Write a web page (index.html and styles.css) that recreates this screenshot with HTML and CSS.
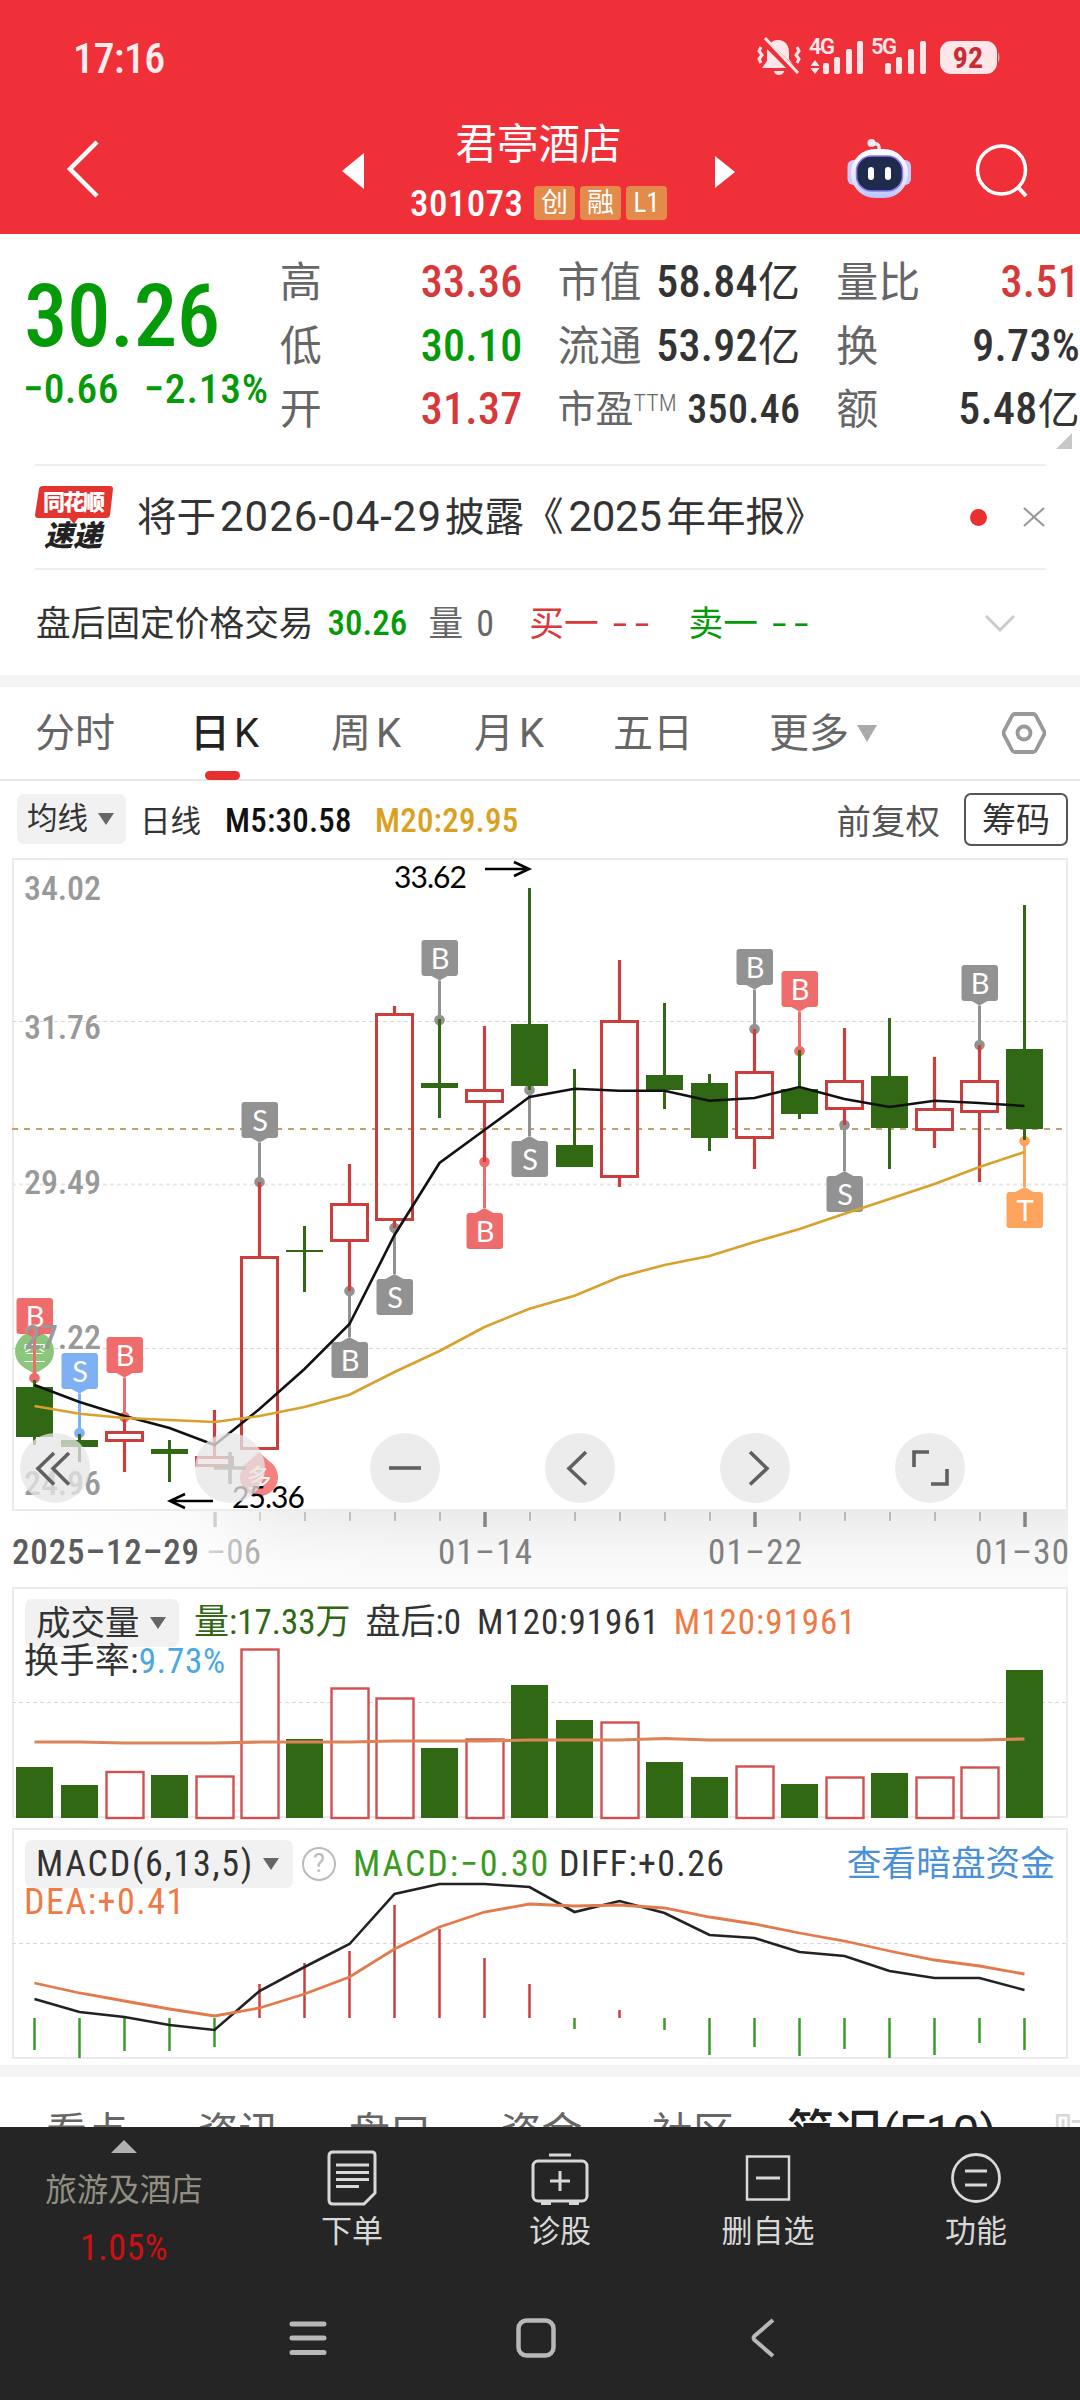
FILE: index.html
```html
<!DOCTYPE html>
<html lang="zh-CN">
<head>
<meta charset="utf-8">
<title>君亭酒店 301073</title>
<link rel="stylesheet" href="styles.css">
</head>
<body>
<header class="top">
  <div class="status">
    <span class="clock">17:16</span>
    <svg class="status-icons" width="250" height="44" viewBox="755 34 250 44">
      <g fill="#ffe6e8">
        <path d="M778 40c-7 0-11 6-11 13v8l-5 7h33l-6-9v-7c0-7-4-12-11-12z"/>
        <path d="M774 71h10a5 4 0 0 1-10 0z"/>
        <path d="M762 39l34 34" stroke="#f03038" stroke-width="7"/>
        <path d="M765 38l33 35M761 47l-2 4 3 4-3 4 2 4M797 47l2 4-3 4 3 4-2 4" fill="none" stroke="#ffe6e8" stroke-width="3"/>
        <text class="net" x="809" y="54" textLength="26">4G</text>
        <text class="net" x="871" y="54" textLength="26">5G</text>
        <path d="M810.500 66l4.500-6 4.500 6zM810.500 68l4.500 6 4.500-6z"/>
        <rect x="823" y="63" width="6" height="11" rx="2"/><rect x="834" y="57" width="6" height="17" rx="2"/><rect x="846" y="49" width="6" height="25" rx="2"/><rect x="857" y="41" width="6" height="33" rx="2"/>
        <rect x="885" y="63" width="6" height="11" rx="2"/><rect x="896" y="57" width="6" height="17" rx="2"/><rect x="908" y="49" width="6" height="25" rx="2"/><rect x="920" y="41" width="6" height="33" rx="2"/>
        <rect x="940" y="41" width="57" height="33" rx="11"/>
        <path d="M998 52q3 5.500 0 11z" fill="#f9a0a5"/>
        <text class="batt" x="968" y="68" text-anchor="middle">92</text>
      </g>
    </svg>
  </div>
  <nav class="nav">
    <svg class="back" width="34" height="60" viewBox="0 0 34 60"><path d="M31 3L4 30l27 27" fill="none" stroke="#fff" stroke-width="4.500"/></svg>
    <svg class="prev" width="23" height="36" viewBox="0 0 23 36"><path d="M0 18L22 0v36z" fill="#fff"/></svg>
    <div class="title">
      <h1>君亭酒店</h1>
      <div class="code"><span>301073</span><i>创</i><i>融</i><i>L1</i></div>
    </div>
    <svg class="next" width="22" height="32" viewBox="0 0 22 32"><path d="M0 0v32L20 16z" fill="#fff"/></svg>
    <svg class="robot" width="68" height="68" viewBox="845 136 68 68">
      <defs><linearGradient id="rb" x1="0" y1="0" x2="0" y2="1"><stop offset="0" stop-color="#fff"/><stop offset=".7" stop-color="#dfe2fb"/><stop offset="1" stop-color="#b9c2ff"/></linearGradient></defs>
      <path d="M879 152c1-8-2-9-6-8" fill="none" stroke="#f3e3f4" stroke-width="3.500"/><circle cx="871.500" cy="143" r="4" fill="#fbe9f3"/>
      <rect x="847.500" y="160" width="12" height="25" rx="6" fill="#c6cbfa"/><rect x="899" y="160" width="12" height="25" rx="6" fill="#c6cbfa"/>
      <rect x="851" y="149" width="57" height="49" rx="24" fill="url(#rb)"/>
      <rect x="856.500" y="156" width="46" height="35" rx="15" fill="#1f2b4d" stroke="#8b79ee" stroke-width="1.500"/>
      <rect x="868" y="167" width="6" height="13" rx="3" fill="#fff"/><rect x="885" y="167" width="6" height="13" rx="3" fill="#fff"/>
    </svg>
    <svg class="search" width="56" height="56" viewBox="0 0 56 56"><circle cx="26.500" cy="27" r="24" fill="none" stroke="#fff" stroke-width="3.500"/><path d="M43 44l8 9" stroke="#fff" stroke-width="4"/></svg>
  </nav>
</header>

<section class="quote">
  <div class="price">
    <b>30.26</b>
    <div class="chg"><span>−0.66</span><span>−2.13%</span></div>
  </div>
  <dl class="col c1">
    <dt>高</dt><dd class="up">33.36</dd>
    <dt>低</dt><dd class="dn">30.10</dd>
    <dt>开</dt><dd class="up">31.37</dd>
  </dl>
  <dl class="col c2">
    <dt>市值</dt><dd>58.84<em>亿</em></dd>
    <dt>流通</dt><dd>53.92<em>亿</em></dd>
    <dt class="sm">市盈<sup>TTM</sup></dt><dd class="sm">350.46</dd>
  </dl>
  <dl class="col c3">
    <dt>量比</dt><dd class="up">3.51</dd>
    <dt>换</dt><dd>9.73%</dd>
    <dt>额</dt><dd>5.48<em>亿</em></dd>
  </dl>
  <svg class="corner" width="16" height="16" viewBox="0 0 16 16"><path d="M16 0v16H0z" fill="#c8c8c8"/></svg>
</section>

<section class="news">
  <div class="logo"><svg width="80" height="42" viewBox="0 0 80 42"><path d="M8 1h67q3 0 3 3l-3 26q-.4 3-4 3H43l-4 6-5-6H3q-3 0-3-3L4 4q.5-3 4-3z" fill="#e3342f"/><text x="8" y="25" textLength="62">同花顺</text></svg><span>速递</span></div>
  <p>将于<span>2026-04-29</span>披露《<span class="y">2025</span>年年报》</p>
  <i class="dot"></i>
  <svg width="22" height="20" viewBox="0 0 22 20"><path d="M1 1l20 18M21 1L1 19" stroke="#999" stroke-width="2.200"/></svg>
</section>

<section class="after">
  <span>盘后固定价格交易</span><b class="dn">30.26</b><span class="g">量</span><span class="g n">0</span>
  <span class="up buy">买一</span><span class="up dd">--</span><span class="dn sell">卖一</span><span class="dn dd">--</span>
  <svg width="32" height="20" viewBox="0 0 32 20"><path d="M2 2l14 14L30 2" fill="none" stroke="#ccc" stroke-width="3"/></svg>
</section>

<nav class="tabs">
  <span>分时</span><span class="on">日K</span><span>周K</span><span>月K</span><span>五日</span><span class="more">更多<svg width="20" height="17" viewBox="0 0 20 17"><path d="M0 0h20L10 17z" fill="#aaa"/></svg></span>
  <svg class="gear" width="44" height="42" viewBox="0 0 44 42"><path d="M13 2h18q2 0 3 2l8 15q1 2 0 4l-8 15q-1 2-3 2H13q-2 0-3-2L2 23q-1-2 0-4l8-15q1-2 3-2z" fill="none" stroke="#999" stroke-width="3.800"/><circle cx="22" cy="21" r="6.500" fill="none" stroke="#999" stroke-width="3.800"/></svg>
</nav>

<div class="tools">
  <span class="pill ma">均线<svg width="16" height="12" viewBox="0 0 16 12"><path d="M0 0h16L8 12z" fill="#666"/></svg></span>
  <span class="day">日线</span><span class="m5">M5:30.58</span><span class="m20">M20:29.95</span>
  <span class="adj">前复权</span><span class="chip">筹码</span>
</div>

<section class="panel kline">
  <svg id="k" width="1080" height="730" viewBox="0 857 1080 730"></svg>
</section>

<section class="panel vol">
  <svg id="v" width="1080" height="240" viewBox="0 1587 1080 240"></svg>
  <div class="legend">
    <span class="pill">成交量<svg width="16" height="12" viewBox="0 0 16 12"><path d="M0 0h16L8 12z" fill="#666"/></svg></span>
    <span class="green">量:17.33万</span><span>盘后:0</span><span class="m120">M120:91961</span><span class="orange m120">M120:91961</span>
  </div>
  <div class="legend2">换手率:<span class="sky">9.73%</span></div>
</section>

<section class="panel macd">
  <svg id="m" width="1080" height="238" viewBox="0 1827 1080 238"></svg>
  <div class="legend">
    <span class="pill">MACD(6,13,5)<svg width="16" height="12" viewBox="0 0 16 12"><path d="M0 0h16L8 12z" fill="#666"/></svg></span>
    <i class="q">?</i>
    <span class="lime">MACD:−0.30</span><span class="diff">DIFF:+0.26</span><a>查看暗盘资金</a>
  </div>
  <div class="legend2 orange">DEA:+0.41</div>
</section>

<nav class="subtabs">
  <span>看点</span><span>资讯</span><span>盘口</span><span>资金</span><span>社区</span><span class="on">简况(F10)</span><span class="fade">财务</span>
</nav>

<footer class="bar">
  <div class="sector">
    <svg width="26" height="13" viewBox="0 0 26 13"><path d="M13 0l13 13H0z" fill="#b0b0b0"/></svg>
    <span>旅游及酒店</span><b>1.05%</b>
  </div>
  <div class="act"><svg width="60" height="60" viewBox="0 0 60 60" fill="none" stroke="#d8d8d8" stroke-width="3"><path d="M11 4h39q3 0 3 3v38l-11 11H11q-4 0-4-4V8q0-4 4-4z"/><path d="M14 17h33M14 24.500h33M14 31.500h33M14 38.500h23"/></svg><span>下单</span></div>
  <div class="act"><svg width="60" height="60" viewBox="0 0 60 60" fill="none" stroke="#d8d8d8" stroke-width="3"><path d="M19 7h22"/><rect x="3" y="13" width="54" height="40" rx="5"/><path d="M30 23v20M20 33h20"/><path d="M11 55.500h10M39 55.500h10"/></svg><span>诊股</span></div>
  <div class="act"><svg width="60" height="60" viewBox="0 0 60 60" fill="none" stroke="#d8d8d8" stroke-width="2.500"><rect x="9" y="8.500" width="42" height="43"/><path d="M18 30h24" stroke-width="3"/></svg><span>删自选</span></div>
  <div class="act"><svg width="60" height="60" viewBox="0 0 60 60" fill="none" stroke="#d8d8d8" stroke-width="2.800"><circle cx="30" cy="30" r="23.500"/><path d="M19 23h22M19 37h22"/></svg><span>功能</span></div>
</footer>
<div class="sys">
  <svg width="38" height="38" viewBox="0 0 38 38" stroke="#b8b8b8" stroke-width="5" stroke-linecap="round"><path d="M3 5h32M3 19h32M3 33.500h32"/></svg>
  <svg width="40" height="40" viewBox="0 0 40 40"><rect x="2.500" y="2.500" width="35" height="35" rx="8" fill="none" stroke="#b8b8b8" stroke-width="4.500"/></svg>
  <svg width="26" height="40" viewBox="0 0 26 40"><path d="M23 2L4.500 18q-2 2 0 4L23 38" fill="none" stroke="#b8b8b8" stroke-width="4"/></svg>
</div>
<script src="charts.js"></script>
</body>
</html>
```
FILE: styles.css
```css
* { box-sizing: border-box; }
body { margin: 0; width: 1080px; height: 2400px; overflow: hidden; background: #fff; color: #333;
  font-family: Roboto, "Noto Sans CJK SC", sans-serif; font-stretch: 75%; }
i, em { font-style: normal; }
svg { display: block; flex: none; }
span, b, i, dt, dd, p, a { white-space: nowrap; }
.up { color: #d7383a; }
.dn { color: #049a08; }

.top { height: 234px; background: #f03038; color: #fff; }
.status { height: 118px; display: flex; align-items: flex-start; padding: 34px 75px 0 73px; justify-content: space-between; }
.clock { font-size: 42px; line-height: 50px; font-weight: 500; color: #ffecec; letter-spacing: -.6px; }
.net { font-size: 22px; font-weight: 600; font-stretch: 88%; }
.batt { font-size: 30px; font-weight: 700; fill: #c92b34; font-stretch: 75%; }
.nav { height: 116px; display: flex; align-items: flex-start; }
.back { margin: 21px 0 0 66px; }
.prev { margin: 35px 0 0 242px; }
.title { margin-left: 32px; width: 281px; }
.title h1 { margin: 0 auto; padding: 2px 0 0 2px; font-size: 41.500px; line-height: 50px; font-weight: 400; text-align: center; width: 170px; white-space: nowrap; }
.code { display: flex; gap: 5px; align-items: center; height: 34px; margin: 16px 0 0 13px; }
.code span { font-size: 37px; line-height: 36px; font-weight: 500; width: 117px; margin-right: 2px; letter-spacing: .4px; padding-top: 2px; }
.code i { width: 41px; height: 34px; border-radius: 4px; background: #e28b4b; font-size: 27px; line-height: 34px; text-align: center; }
.next { margin: 38px 0 0 37px; }
.robot { margin: 18px 0 0 108px; }
.search { margin: 25px 0 0 62px; }

.quote { position: relative; height: 230px; display: flex; padding-left: 25px; }
.price { width: 255px; color: #049a08; }
.price b { display: block; margin-top: 31px; font-size: 87px; line-height: 102px; font-weight: 500; letter-spacing: -.5px; margin-left: -1px; }
.chg { display: flex; gap: 25px; font-size: 41.500px; line-height: 44px; font-weight: 500; letter-spacing: .8px; margin-left: -2px; }
.chg span:first-child { letter-spacing: .3px; }
.col { margin: 17px 0 0; display: grid; grid-template-columns: 84px 1fr; grid-auto-rows: 63.500px; line-height: 63.500px; }
.col dt { font-size: 42px; color: #666; }
.col dd { margin: 0; font-size: 44px; font-weight: 500; text-align: right; letter-spacing: .3px; }
.col dd em { font-size: 42px; font-weight: 400; }
.col .sm { font-size: 40px; }
.col dt.sm { font-size: 38px; }
.col sup { font-size: 24px; line-height: 1; vertical-align: 11px; font-weight: 300; }
.c1 { width: 243px; }
.c2 { width: 243px; margin-left: 35px; }
.c3 { width: 244px; margin-left: 36px; }
.corner { position: absolute; right: 8px; bottom: 15px; }

.news { height: 106px; margin: 0 34px 0 35px; border-top: 2px solid #eee; border-bottom: 2px solid #eee; display: flex; align-items: center; }
.logo { width: 80px; height: 66px; margin-top: 1px; }
.logo text { fill: #fff; font-size: 22px; font-weight: 900; }
.logo span { display: block; margin: -4px 0 0 9px; font-size: 29px; line-height: 26px; font-weight: 900; font-style: italic; color: #222; }
.news p { margin: 0 0 0 22px; font-size: 39.500px; line-height: 60px; color: #333; width: 833px; }
.news p span { font-size: 42px; font-stretch: 100%; letter-spacing: 1px; margin: 0 3px 0 4px; }
.news p .y { letter-spacing: -.4px; margin: 0 5px; }
.dot { width: 17px; height: 17px; border-radius: 50%; background: #e83030; margin-right: 36px; }

.after { height: 105px; padding-left: 36px; display: flex; align-items: center; font-size: 34.700px; line-height: 50px; padding-top: 2px; }
.after b { font-weight: 500; font-size: 35px; margin-left: 14px; width: 77px; }
.after .g { color: #666; margin-left: 24px; }
.after .g.n { margin-left: 13px; width: 17px; font-size: 36px; }
.after .buy { margin-left: 36px; }
.after .sell { margin-left: 38px; }
.after .dd { font-size: 52px; font-weight: 300; font-stretch: 100%; letter-spacing: 7px; margin-left: 14px; width: 38px; line-height: 44px; }
.after svg { margin-left: 174px; }

.tabs { height: 106px; border-top: 12px solid #f4f4f4; border-bottom: 2px solid #e8e8e8; display: flex; align-items: center; font-size: 40px; line-height: 95px; color: #666; padding-left: 35px; font-stretch: 100%; }
.tabs span { width: 77px; margin-right: 78px; }
.tabs .on { position: relative; color: #222; font-weight: 450; width: 70px; margin-right: 71px; letter-spacing: 4px; }
.tabs .on::after { content: ""; position: absolute; left: 15px; bottom: 1px; width: 35px; height: 9px; border-radius: 5px; background: #e63030; }
.tabs span:nth-child(3) { width: 70px; margin-right: 73px; letter-spacing: 5px; }
.tabs span:nth-child(4) { width: 70px; margin-right: 69px; letter-spacing: 5px; }
.tabs .more { display: flex; align-items: center; gap: 8px; width: 109px; margin-right: 120px; margin-left: 1px; }
.gear { margin-left: 4px; }

.tools { height: 76px; display: flex; align-items: center; padding: 0 12px 0 17px; font-size: 30.500px; line-height: 50px; }
.pill { display: flex; align-items: center; background: #f1f1f1; border-radius: 7px; }
.tools .pill { width: 109px; height: 50px; padding: 0 0 0 10px; gap: 10px; }
.day { margin-left: 14px; padding-top: 5px; }
.m5, .m20 { font-size: 33px; font-weight: 500; color: #111; margin-left: 24px; width: 127px; letter-spacing: .2px; padding-top: 4px; }
.m20 { color: #dca020; width: 143px; letter-spacing: .2px; margin-left: 23px; }
.adj { margin-left: auto; font-size: 34.500px; color: #555; padding-top: 5px; }
.chip { margin-left: 24px; width: 104px; height: 53px; border: 2px solid #555; border-radius: 7px; font-size: 34px; line-height: 51px; text-align: center; }

.panel { position: relative; }
.kline { height: 730px; }
.vol { height: 240px; }
.macd { height: 238px; }
.legend { position: absolute; left: 25px; right: 25px; top: 12px; height: 48px; display: flex; align-items: center; font-size: 35px; line-height: 50px; }
.legend .pill { height: 48px; padding: 0 13px 0 11px; gap: 10px; font-size: 34.500px; width: 154px; }
.legend2 { position: absolute; left: 24px; top: 51px; font-size: 35px; line-height: 48px; white-space: nowrap; letter-spacing: .4px; }
.vol .legend > span + span { margin-left: 15px; }
.vol .legend .m120 { letter-spacing: 1px; margin-left: 16px; }
.vol .legend .orange { margin-left: 14px; }
.macd .legend { top: 13px; font-size: 36px; }
.macd .legend .pill { width: 268px; font-size: 36px; letter-spacing: 1.750px; gap: 9px; }
.q { width: 34px; height: 34px; border: 2.500px solid #bbb; border-radius: 50%; color: #bbb; font-size: 25px; line-height: 30px; text-align: center; margin: 0 17px 0 9px; font-stretch: 100%; }
.lime { letter-spacing: 1.900px; width: 206px; }
.diff { letter-spacing: 1.300px; }
.macd .legend a { margin-left: auto; color: #4a90d9; font-size: 34.700px; }
.green { color: #306814; } .lime { color: #3a9a22; } .orange { color: #f07a45; } .sky { color: #4aa8e0; letter-spacing: .8px; }
.macd .legend2 { font-size: 36px; letter-spacing: 1.500px; }

.axis { fill: #999; font-size: 34px; font-weight: 500; }
.date { fill: #808080; font-size: 35px; }
.ext { font-family: Lato, sans-serif; font-size: 30px; fill: #000; font-stretch: 100%; }
.mark { font-family: Lato, "Noto Sans CJK SC", sans-serif; font-size: 29px; fill: #fff; text-anchor: middle; font-stretch: 100%; }

.subtabs { height: 62px; border-top: 12px solid #f4f4f4; overflow: hidden; display: flex; font-size: 41px; line-height: 112px; color: #666; padding-left: 46px; }
.subtabs span { margin-right: 69.500px; flex: none; }
.subtabs .on { color: #222; font-weight: 450; font-size: 48px; line-height: 112px; margin: 0 54px 0 -17px; font-stretch: 100%; width: 212px; }
.subtabs .fade { color: #d8d8d8; margin: 0; }

.bar { height: 151px; background: #252525; display: flex; color: #d8d8d8; font-size: 31px; }
.sector { width: 248px; display: flex; flex-direction: column; align-items: center; padding-top: 13px; color: #908f82; }
.sector span { margin-top: 18px; line-height: 40px; font-size: 31.500px; }
.sector b { margin-top: 17px; line-height: 40px; color: #cf1010; font-weight: 400; font-size: 36px; letter-spacing: .5px; }
.act { width: 208px; display: flex; flex-direction: column; align-items: center; padding-top: 21px; }
.act span { line-height: 40px; margin-top: 4px; }
.sys { height: 122px; background: #252525; display: flex; }
.sys svg { margin-top: 41px; margin-left: 289px; }
.sys svg + svg { margin: 40px 0 0 189px; }
.sys svg + svg + svg { margin-left: 194px; }
```
FILE: charts.js
```js
const X = i => 34.5 + 45 * i;
const GREEN = '#306814', RED = '#cb3e3e';
const el = (id, s) => { document.getElementById(id).innerHTML = s; };
const line = (ys, color, w) =>
  `<polyline points="${ys.map((y, i) => X(i) + ',' + y).join(' ')}" fill="none" stroke="${color}" stroke-width="${w}"/>`;
const frame = (y0, y1) => `<rect x="13" y="${y0}" width="1054" height="${y1 - y0}" fill="none" stroke="#ebebeb" stroke-width="2"/>`;
const dash = (y, color, d, w) => `<path d="M12 ${y}H1066" stroke="${color}" stroke-width="${w}" stroke-dasharray="${d}"/>`;

// [rising, body top, body bottom, high, low]
const candles = [
  [0,1387,1437,1380,1445],[0,1440,1447,1434,1462],[1,1431,1442,1418,1472],[0,1449,1454,1440,1482],
  [1,1456,1467,1410,1467],[1,1256,1450,1182,1450],[0,1250,1252,1226,1292],[1,1203,1242,1164,1291],
  [1,1013,1221,1006,1228],[0,1083,1088,1019,1118],[1,1089,1103,1026,1162],[0,1024,1086,888,1090],
  [0,1145,1167,1069,1167],[1,1020,1178,960,1187],[0,1075,1090,1003,1109],[0,1083,1138,1074,1151],
  [1,1071,1139,1029,1169],[0,1089,1114,1050,1119],[1,1080,1110,1028,1125],[0,1076,1128,1018,1169],
  [1,1108,1131,1057,1148],[1,1080,1113,1045,1182],[0,1049,1129,905,1140]];
const ma5 = [1385,1402,1416,1428,1445,1409,1369,1324,1235,1163,1130,1097,1088.7,1090.7,1090.7,1100.7,1098,1087,1099,1107,1100.7,1103,1106];
const ma20 = [1406,1413.7,1418,1420,1422,1416,1407,1394.7,1372,1351,1327,1308.7,1295.7,1277,1265,1256,1242,1229,1213.7,1199,1184,1167,1152];

// [index, letter, colour, dot y, box above the dot]
const G = '#929292', R = '#ef6c6c';
const marks = [
  [0,'B',R,1378,1],[1,'S','#7db1f3',1433,1],[2,'B',R,1417,1],[5,'S',G,1182,1],[9,'B',G,1020,1],
  [16,'B',G,1029,1],[17,'B',R,1051,1],[21,'B',G,1045,1],[7,'B',G,1291,0],[8,'S',G,1228,0],
  [10,'B',R,1162,0],[11,'S',G,1090,0],[18,'S',G,1125,0],[22,'T','#ffa45c',1141,0]];
const mark = ([i, t, c, y, above]) => {
  const x = X(i), top = above ? y - 80 : y + 51, edge = above ? y - 44.5 : y + 51, tip = above ? y - 39.5 : y + 46;
  return `<path d="M${x} ${tip}V${y}" stroke="${c}" stroke-width="3"/><circle cx="${x}" cy="${y}" r="5.3" fill="${c}"/>` +
    `<rect x="${x - 18}" y="${top}" width="36.5" height="36" rx="3" fill="${c}"/>` +
    `<path d="M${x - 9} ${edge}h18L${x} ${tip}z" fill="${c}"/><text class="mark" x="${x + .5}" y="${top + 28.5}">${t}</text>`;
};

let s = frame(859, 1510) + dash(1021.5, '#d8d8d8', '4 3', 1.2) + dash(1184.5, '#e8e8e8', '4 3', 2) +
  dash(1348.5, '#d8d8d8', '4 3', 1.2) + dash(1129, '#c2a070', '6 6', 2);
s += `<path d="M34.500 1374l-10-6a19.500 19.500 0 1 1 20 0z" fill="#7cbe6a" opacity=".88"/><text class="mark" x="34.500" y="1361" style="font-size:24px;font-weight:300">空</text>`;
s += marks.map(mark).join('');
s += `<path d="M259 1452l10 9a19 19 0 1 1-20 0z" fill="#f58080"/><text class="mark" x="259" y="1487" style="font-size:25px">多</text>`;
candles.forEach(([up, t, b, h, l], i) => {
  const x = X(i);
  if (up) s += `<path d="M${x} ${h}V${t}M${x} ${b}V${l}" stroke="${RED}" stroke-width="3.2"/><rect x="${x - 18}" y="${t + 1.500}" width="36" height="${b - t - 3}" fill="none" stroke="${RED}" stroke-width="3"/>`;
  else s += `<path d="M${x} ${h}V${l}" stroke="${GREEN}" stroke-width="3"/><rect x="${x - 18.500}" y="${t}" width="37" height="${b - t}" fill="${GREEN}"/>`;
});
s += line(ma5, '#111', 2.6) + line(ma20, '#d9a02c', 2.6);
[[900, '34.02'], [1039, '31.76'], [1194, '29.49'], [1349, '27.22'], [1495, '24.96']].forEach(([y, t]) => {
  s += `<text class="axis" x="24" y="${y}" textLength="77">${t}</text>`;
});
s += `<text class="ext" x="394" y="888" textLength="73">33.62</text><path d="M485 869H529M514 862l15 7-15 7" fill="none" stroke="#000" stroke-width="2.6"/>`;
s += `<text class="ext" x="232" y="1508" textLength="73">25.36</text><path d="M213 1501H170M185 1494l-15 7 15 7" fill="none" stroke="#000" stroke-width="2.6"/>`;
[55, 230, 405, 580, 755, 930].forEach(x => { s += `<circle cx="${x}" cy="1468" r="35" fill="#e6e6e6" fill-opacity=".76"/>`; });
s += `<g fill="none" stroke="#606060" stroke-width="3.6"><path d="M54 1453l-16 15.500 16 16M69 1453l-16 15.500 16 16"/><path d="M230 1452v32M214 1468h32" stroke="#c8c8c8"/><path d="M389 1468h32"/><path d="M586 1452l-17 16.500 17 16"/><path d="M750 1452l17 16.500-17 16"/><path d="M929 1452h-15v15M947 1469v15h-16"/></g>`;
// date axis
s += `<defs><linearGradient id="ax" x1="0" y1="0" x2="0" y2="1"><stop offset="0" stop-color="#ebebeb"/><stop offset=".6" stop-color="#f8f8f8"/><stop offset="1" stop-color="#fbfbfb"/></linearGradient>
<linearGradient id="wf" x1="0" y1="0" x2="1" y2="0"><stop offset="0" stop-color="#fff"/><stop offset=".45" stop-color="#fff" stop-opacity=".75"/><stop offset=".68" stop-color="#fff" stop-opacity=".2"/><stop offset="1" stop-color="#fff" stop-opacity="0"/></linearGradient></defs>
<rect x="12" y="1511" width="1056" height="76" fill="url(#ax)"/>`;
for (let i = 4; i <= 22; i++) {
  const major = (i - 4) % 6 === 0;
  s += `<path d="M${X(i) + .5} 1512v${major ? 15 : 9}" stroke="${major ? '#858585' : '#b8b8b8'}" stroke-width="${major ? 3.500 : 2}"/>`;
}
s += `<text class="date" x="206" y="1564" textLength="55">–06</text><rect x="12" y="1511" width="400" height="76" fill="url(#wf)"/>`;
s += `<text class="date" x="12" y="1564" textLength="187" style="fill:#5c5c5c;font-weight:500">2025–12–29</text>`;
[[438, '01–14'], [708, '01–22'], [975, '01–30']].forEach(([x, t]) => {
  s += `<text class="date" x="${x}" y="1564" textLength="94">${t}</text>`;
});
el('k', s);

const rising = candles.map(c => c[0]);
const vol = [1767,1785,1771,1775,1775.5,1648.5,1739,1687.5,1697.5,1748,1738.5,1685,1720,1721.5,1762,1777,1765.5,1784,1776.5,1773,1776.5,1766.5,1670];
const m120 = [1742,1742,1743,1743,1743,1742,1742,1742,1741,1741,1741,1740,1740,1740,1738.5,1740,1740,1740,1740,1740,1740,1740,1739];
let v = frame(1588, 1817) + dash(1702.5, '#d8d8d8', '4 3', 1.2);
vol.forEach((y, i) => {
  v += rising[i]
    ? `<rect x="${X(i) - 18}" y="${y + 1}" width="37" height="${1817 - y}" fill="#fff" stroke="#d25050" stroke-width="2.4"/>`
    : `<rect x="${X(i) - 18.500}" y="${y}" width="37" height="${1818 - y}" fill="${GREEN}"/>`;
});
el('v', v + line(m120, '#dd8358', 3.2));

const diff = [1999,2012,2017,2025,2030,1991,1967,1944,1894,1884,1884,1887,1912,1901,1913,1935,1938,1952,1956,1971,1978,1978,1990];
const dea = [1983,1993,2001,2009,2016,2008,1994,1977,1949,1927,1912,1904,1906,1905,1908,1917,1924,1933,1941,1951,1960,1966,1974];
const hist = [2050,2058,2051,2051,2047,1984,1963,1951,1905,1929,1958,1984,2029,2010,2030,2055,2047,2056,2049,2058,2055,2043,2050];
let m = frame(1829, 2058) + dash(1943.5, '#d8d8d8', '4 3', 1.2);
hist.forEach((y, i) => { m += `<path d="M${X(i)} 2018V${y}" stroke="${y < 2018 ? RED : '#3a9a2a'}" stroke-width="2.500"/>`; });
el('m', m + line(diff, '#222', 2.6) + line(dea, '#e37a4c', 2.8));
```
